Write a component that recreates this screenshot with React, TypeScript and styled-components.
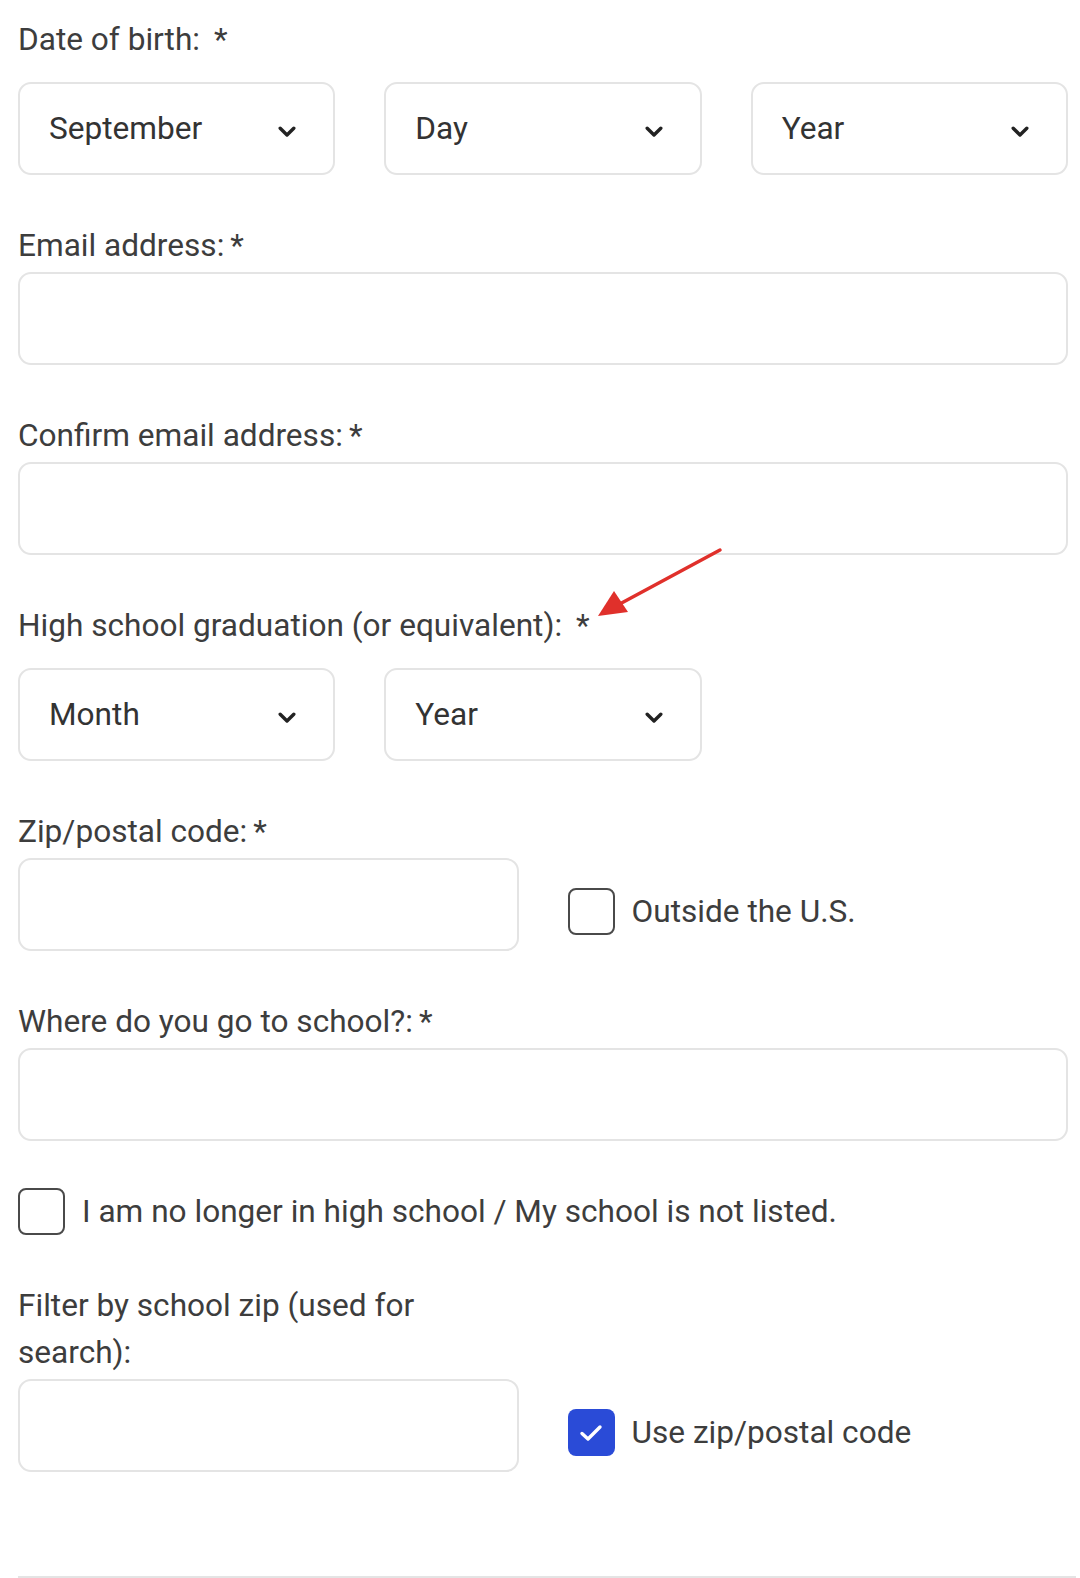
import React from 'react';
import styled, { createGlobalStyle } from 'styled-components';

const GlobalStyle = createGlobalStyle`
  html, body {
    margin: 0;
    padding: 0;
    background: #fff;
  }
  body {
    font-family: Roboto, "Liberation Sans", Arial, sans-serif;
    color: #3a3a3a;
  }
  * { box-sizing: border-box; }
`;

const Form = styled.form`
  position: relative;
  width: 100%;
  padding: 16px 12px 0 18px;
  display: flex;
  flex-direction: column;
  gap: 47px;
`;

const Field = styled.div`
  display: flex;
  flex-direction: column;
`;

const Label = styled.label<{ $narrow?: boolean; $select?: boolean }>`
  font-size: 31.6px;
  line-height: 47px;
  color: #3d3d3d;
  margin-bottom: ${(p) => (p.$select ? '19px' : '3px')};
  max-width: ${(p) => (p.$narrow ? '440px' : 'none')};
`;

const Star = styled.span<{ $space?: number }>`
  margin-left: ${(p) => p.$space ?? 6}px;
`;

const Row = styled.div<{ $cols: number }>`
  display: grid;
  grid-template-columns: repeat(${(p) => p.$cols}, 1fr);
  column-gap: 49px;
  align-items: center;
`;

const SelectBox = styled.div`
  height: 93px;
  border: 2px solid #e4e4e4;
  border-radius: 13px;
  display: flex;
  align-items: center;
  justify-content: space-between;
  padding: 0 37px 0 29px;
  font-size: 31.6px;
  color: #333;
  background: #fff;

  svg {
    margin-top: 7px;
  }
`;

const TextInput = styled.input`
  height: 93px;
  width: 100%;
  border: 2px solid #e4e4e4;
  border-radius: 13px;
  font-size: 31px;
  font-family: inherit;
  padding: 0 28px;
  background: #fff;
  outline: none;
`;

const CheckRow = styled.label<{ $drop?: boolean }>`
  display: flex;
  align-items: center;
  gap: 17px;
  font-size: 31.6px;
  line-height: 47px;
  color: #3d3d3d;
  margin-top: ${(p) => (p.$drop ? '14px' : '0')};
`;

const Box = styled.span<{ $checked?: boolean }>`
  width: 47px;
  height: 47px;
  flex: none;
  border-radius: 8px;
  border: ${(p) => (p.$checked ? 'none' : '2px solid #4a4a4a')};
  background: ${(p) => (p.$checked ? '#2a4bd7' : '#fff')};
  display: flex;
  align-items: center;
  justify-content: center;
`;

const Divider = styled.div`
  margin: 104px -8px 0 0;
  height: 3px;
  background: #e4e4e4;
`;

const Annotation = styled.svg`
  position: absolute;
  left: 590px;
  top: 544px;
  pointer-events: none;
`;

const Chevron = () => (
  <svg width="18" height="12" viewBox="0 0 18 12">
    <path d="M2.2 2.2 L9 9 L15.8 2.2" fill="none" stroke="#222" strokeWidth="3.4" strokeLinecap="round" strokeLinejoin="round" />
  </svg>
);

const Select = ({ value }: { value: string }) => (
  <SelectBox>
    <span>{value}</span>
    <Chevron />
  </SelectBox>
);

const Check = ({ checked, drop, children }: { checked?: boolean; drop?: boolean; children: React.ReactNode }) => (
  <CheckRow $drop={drop}>
    <Box $checked={checked}>
      {checked && (
        <svg width="26" height="20" viewBox="0 0 26 20">
          <path d="M4 10.5 L10 16 L22 4" fill="none" stroke="#fff" strokeWidth="3.4" strokeLinecap="round" strokeLinejoin="round" />
        </svg>
      )}
    </Box>
    {children}
  </CheckRow>
);

export default function App() {
  return (
    <>
      <GlobalStyle />
      <Form>
        <Field>
          <Label $select>
            Date of birth:<Star $space={14}>*</Star>
          </Label>
          <Row $cols={3}>
            <Select value="September" />
            <Select value="Day" />
            <Select value="Year" />
          </Row>
        </Field>

        <Field>
          <Label>
            Email address:<Star>*</Star>
          </Label>
          <TextInput />
        </Field>

        <Field>
          <Label>
            Confirm email address:<Star>*</Star>
          </Label>
          <TextInput />
        </Field>

        <Field>
          <Label $select>
            High school graduation (or equivalent):<Star $space={14}>*</Star>
          </Label>
          <Row $cols={3}>
            <Select value="Month" />
            <Select value="Year" />
          </Row>
        </Field>

        <Field>
          <Label>
            Zip/postal code:<Star>*</Star>
          </Label>
          <Row $cols={2}>
            <TextInput />
            <Check drop>Outside the U.S.</Check>
          </Row>
        </Field>

        <Field>
          <Label>
            Where do you go to school?:<Star>*</Star>
          </Label>
          <TextInput />
        </Field>

        <Check>I am no longer in high school / My school is not listed.</Check>

        <Field>
          <Label $narrow>Filter by school zip (used for search):</Label>
          <Row $cols={2}>
            <TextInput />
            <Check checked drop>Use zip/postal code</Check>
          </Row>
          <Divider />
        </Field>

        <Annotation width="140" height="84" viewBox="0 0 140 84">
          <line x1="130" y1="6" x2="26" y2="62" stroke="#e0302b" strokeWidth="3.5" strokeLinecap="round" />
          <polygon points="8,72 24,47 38,68" fill="#e0302b" />
        </Annotation>
      </Form>
    </>
  );
}
